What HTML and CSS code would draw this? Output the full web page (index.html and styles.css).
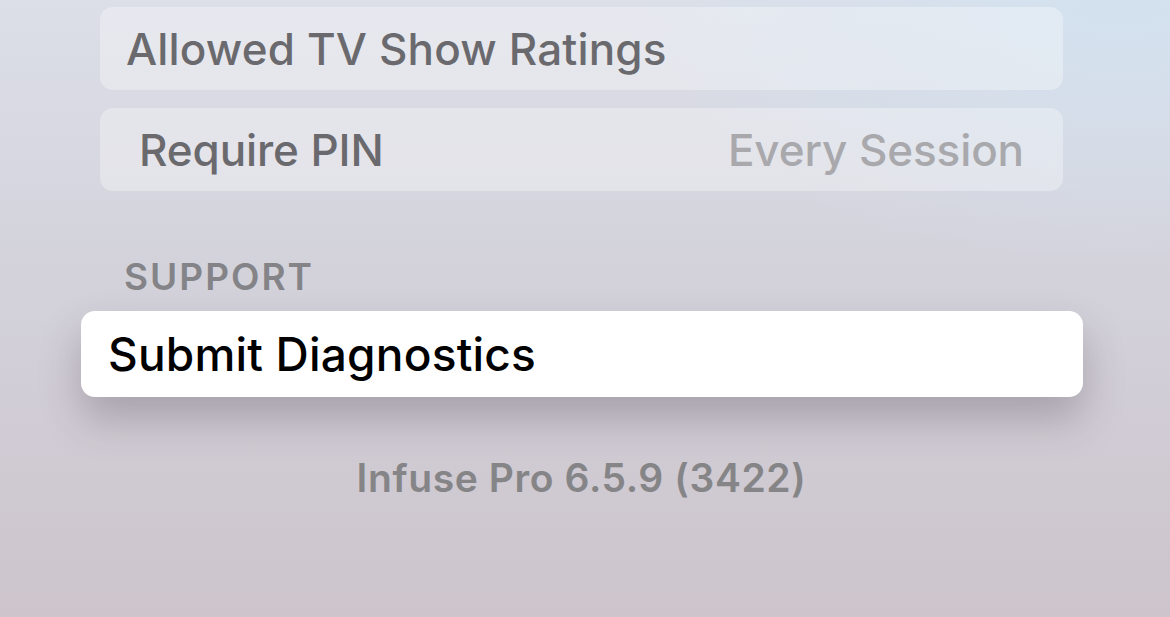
FILE: index.html
```html
<!DOCTYPE html>
<html lang="en">
<head>
<meta charset="utf-8">
<title>Settings</title>
<link rel="stylesheet" href="styles.css">
</head>
<body>
<div class="screen">
  <div class="list">
    <div class="row row-ratings"><span class="label">Allowed TV Show Ratings</span></div>
    <div class="row row-pin"><span class="label">Require PIN</span><span class="value">Every Session</span></div>
    <div class="section-title">SUPPORT</div>
    <div class="row focused"><span class="label">Submit Diagnostics</span></div>
    <div class="footer">Infuse Pro 6.5.9 (3422)</div>
  </div>
</div>
</body>
</html>
```
FILE: styles.css
```css
html, body {
  margin: 0;
  padding: 0;
}
body {
  width: 1170px;
  height: 617px;
  overflow: hidden;
  font-family: Inter, "Noto Sans", "Liberation Sans", sans-serif;
}
.screen {
  width: 1170px;
  height: 617px;
  background:
    radial-gradient(ellipse 500px 260px at 1120px 0px, rgba(210, 226, 240, 0.9), rgba(210, 226, 240, 0) 100%),
    linear-gradient(180deg, #dcdfe8 0%, #d3d2db 45%, #cdc4cc 100%);
}
.list {
  display: flex;
  flex-direction: column;
  padding: 7px 0 0 100px;
  width: 963px;
}
.row {
  display: flex;
  align-items: center;
  justify-content: space-between;
  height: 83px;
  border-radius: 13px;
  background: rgba(255, 255, 255, 0.32);
  color: #6a6a6e;
  font-size: 44px;
  font-weight: 500;
  letter-spacing: 0.15px;
  box-sizing: border-box;
}
.row-ratings {
  padding: 0 39px 0 26px;
}
.row-pin {
  margin-top: 18px;
  padding: 0 39px 0 39px;
}
.row-pin .label,
.row-pin .value {
  letter-spacing: -0.1px;
}
.value {
  color: #a9a9ad;
}
.section-title {
  margin-top: 66px;
  height: 40px;
  line-height: 40px;
  padding-left: 24px;
  color: #848488;
  font-size: 37px;
  font-weight: 600;
  letter-spacing: 2px;
}
.row.focused {
  margin: 14px -20px 0 -19px;
  height: 86px;
  padding: 0 27px;
  background: #ffffff;
  color: #000000;
  font-size: 46px;
  letter-spacing: 0.2px;
  border-radius: 14px;
  box-shadow: 0 22px 40px rgba(60, 50, 60, 0.28);
}
.footer {
  margin-top: 61px;
  height: 40px;
  line-height: 40px;
  text-align: center;
  color: #858587;
  font-size: 39px;
  font-weight: 600;
  letter-spacing: 0.6px;
}
```
